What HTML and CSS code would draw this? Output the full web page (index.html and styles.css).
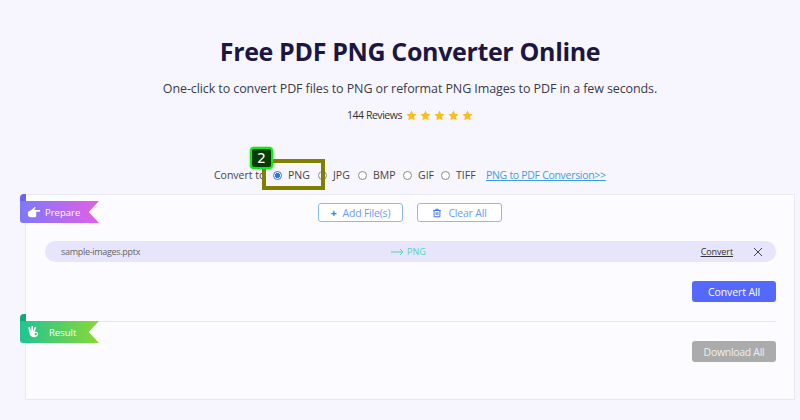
FILE: index.html
```html
<!DOCTYPE html>
<html lang="en">

<head>
  <meta charset="UTF-8">
  <meta name="viewport" content="width=device-width, initial-scale=1.0">
  <title>Free PDF PNG Converter Online</title>
  <link rel="stylesheet" href="styles.css">
</head>

<body>

  <div class="top">
    <h1>Free PDF PNG Converter Online</h1>
    <p class="sub">One-click to convert PDF files to PNG or reformat PNG Images to PDF in a few seconds.</p>
    <div class="reviews">
      <span>144 Reviews</span>
      <span class="stars">
        <svg viewBox="0 0 24 24"><path d="M12 1l3.300 7.300 7.700.9-5.700 5.300 1.600 7.800L12 18.300l-6.900 4 1.600-7.800L1 9.200l7.700-.9z" /></svg>
        <svg viewBox="0 0 24 24"><path d="M12 1l3.300 7.300 7.700.9-5.700 5.300 1.600 7.800L12 18.300l-6.900 4 1.600-7.800L1 9.200l7.700-.9z" /></svg>
        <svg viewBox="0 0 24 24"><path d="M12 1l3.300 7.300 7.700.9-5.700 5.300 1.600 7.800L12 18.300l-6.900 4 1.600-7.800L1 9.200l7.700-.9z" /></svg>
        <svg viewBox="0 0 24 24"><path d="M12 1l3.300 7.300 7.700.9-5.700 5.300 1.600 7.800L12 18.300l-6.900 4 1.600-7.800L1 9.200l7.700-.9z" /></svg>
        <svg viewBox="0 0 24 24"><path d="M12 1l3.300 7.300 7.700.9-5.700 5.300 1.600 7.800L12 18.300l-6.900 4 1.600-7.800L1 9.200l7.700-.9z" /></svg>
      </span>
    </div>
  </div>

  <div class="formats">
    <span class="formats-label">Convert to</span>
    <label class="opt opt-png"><span class="radio on"></span>PNG</label>
    <label class="opt opt-jpg"><span class="radio"></span>JPG</label>
    <label class="opt opt-bmp"><span class="radio"></span>BMP</label>
    <label class="opt opt-gif"><span class="radio"></span>GIF</label>
    <label class="opt opt-tiff"><span class="radio"></span>TIFF</label>
    <a class="formats-link" href="#">PNG to PDF Conversion&gt;&gt;</a>
  </div>

  <div class="card">
    <div class="tag tag-prepare">
      <svg viewBox="0 0 16 16"><path d="M1 8.500c0-.8.5-1.300 1.200-1.500L5 5.800 8.500 2.500c.7-.6 1.600.3 1.100 1L8.200 5.800h6c1.200 0 1.200 1.900 0 1.900h-3.700v5c0 .8-.7 1.300-1.400 1.300H4.500C2.500 14 1 12.500 1 10.500z" /></svg>
      <span>Prepare</span>
    </div>
    <div class="actions">
      <button class="btn-line"><span class="plus">+</span>Add File(s)</button>
      <button class="btn-line">
        <svg class="trash" viewBox="0 0 12 12"><path d="M1.500 3h9M4.500 3V1.500h3V3M2.500 3v7.500h7V3M5 5v3.500M7 5v3.500" /></svg>Clear All</button>
    </div>
    <div class="file-row">
      <span class="file-name">sample-images.pptx</span>
      <span class="file-target">
        <svg viewBox="0 0 13 8"><path d="M0 4h12M9 1l3 3-3 3" /></svg>
        PNG</span>
      <a class="file-convert" href="#">Convert</a>
      <svg class="file-close" viewBox="0 0 10 10"><path d="M1 1l8 8M9 1l-8 8" /></svg>
    </div>
    <div class="row-end">
      <button class="btn-fill">Convert All</button>
    </div>
    <div class="result">
      <div class="tag tag-result">
        <svg viewBox="0 0 16 16"><path d="M3 2l2 5 .2-6 1.600 0 .2 6 2-5 1.400.6-1.600 5.400c1.800-.6 3.700.4 3.700 2.400 0 2.100-1.700 3.600-4 3.600-3 0-5-1.600-5.500-4L1.500 3z" /><circle cx="10" cy="10.500" r="1.300" fill="#2cc78c" /></svg>
        <span>Result</span>
      </div>
      <div class="row-end">
        <button class="btn-fill btn-off">Download All</button>
      </div>
    </div>
  </div>

  <!-- annotation drawn over the page -->
  <div class="mark-box"></div>
  <div class="mark-num">2</div>

</body>

</html>
```

FILE: styles.css
```css
* {
  margin: 0;
  padding: 0;
  box-sizing: border-box;
}

html,
body {
  width: 100%;
  height: 100%;
  overflow: hidden;
}

body {
  background-color: #f7f6fe;
  color: #333;
  font-family: "Open Sans", "Noto Sans", sans-serif;
  position: relative;
}

.top {
  text-align: center;
  padding: 33px 0 0 20px;
}

h1 {
  font-size: 25px;
  line-height: 36px;
  font-weight: 700;
  letter-spacing: -0.35px;
  color: #1c1740;
}

.sub {
  font-size: 12.500px;
  line-height: 20px;
  margin-top: 10px;
  letter-spacing: -0.1px;
  color: #3b3b4a;
}

.reviews {
  display: flex;
  justify-content: center;
  align-items: center;
  gap: 4px;
  margin-top: 8px;
  font-size: 10.500px;
  line-height: 16px;
  letter-spacing: -0.45px;
}

.stars {
  display: flex;
  gap: 3px;
}

.stars svg {
  width: 11px;
  height: 11px;
  fill: #fdbd12;
}

.formats {
  display: flex;
  align-items: center;
  height: 20px;
  margin-top: 42px;
  padding-left: 214px;
  font-size: 10.500px;
  color: #444;
}

.formats-label {
  width: 59px;
}

.opt {
  display: flex;
  align-items: center;
  gap: 6px;
}

.opt-png {
  width: 45px;
}

.opt-jpg {
  width: 40px;
}

.opt-bmp {
  width: 45px;
}

.opt-gif {
  width: 38px;
}

.opt-tiff {
  width: 45px;
}

.radio {
  width: 9px;
  height: 9px;
  border-radius: 50%;
  border: 1px solid #8b8b8b;
  background: #fff;
}

.radio.on {
  border: 1px solid #2f73e8;
  background: radial-gradient(circle, #2f73e8 50%, #fff 58%);
}

.formats-link {
  color: #3d9be9;
  letter-spacing: -0.3px;
}

.card {
  position: relative;
  margin: 9px 5px 0 25px;
  height: 206px;
  background-color: #fcfbff;
  border: 1px solid #e9e8f3;
  padding-top: 8px;
}

.tag {
  position: absolute;
  left: -6px;
  width: 79px;
  height: 22px;
  display: flex;
  align-items: center;
  color: #fff;
  font-size: 9.500px;
  clip-path: polygon(0 0, 100% 0, 87% 50%, 100% 100%, 0 100%);
  border-radius: 0 0 0 3px;
}

.tag svg {
  width: 14px;
  height: 14px;
  fill: #fff;
  margin-left: 7px;
}

.tag span {
  margin-left: 4px;
}

.tag-prepare {
  top: 6px;
  background: linear-gradient(90deg, #7d78fb, #e25fe4);
}

.tag-result {
  top: -1px;
  background: linear-gradient(90deg, #1fc492, #8ad837);
}

.tag-result span {
  margin-left: 8px;
}

.card::before,
.result::before {
  content: "";
  position: absolute;
  left: -6px;
  width: 6px;
  height: 8px;
  border-radius: 4px 0 0 0;
}

.card::before {
  top: -1px;
  background: #6a63ee;
}

.result::before {
  top: -8px;
  background: #12a878;
}

.actions {
  display: flex;
  justify-content: center;
  gap: 14px;
}

.btn-line {
  display: flex;
  justify-content: center;
  align-items: center;
  gap: 6px;
  width: 85px;
  height: 19px;
  font: inherit;
  font-size: 10.500px;
  letter-spacing: -0.2px;
  color: #6c9bf6;
  background: #fff;
  border: 1px solid #8fb5fa;
  border-radius: 3px;
}

.plus {
  font-weight: 700;
  color: #3f78ee;
}

.trash {
  width: 10px;
  height: 10px;
  fill: none;
  stroke: #3f78ee;
  stroke-width: 1.200;
}

.file-row {
  display: flex;
  align-items: center;
  height: 21px;
  margin: 19px 18px 0 19px;
  padding: 0 13px 0 16px;
  background-color: #e7e5fb;
  border-radius: 11px;
  font-size: 9px;
}

.file-name {
  width: 330px;
  color: #666;
  letter-spacing: -0.3px;
}

.file-target {
  display: flex;
  align-items: center;
  gap: 3px;
  color: #56d3b0;
}

.file-target svg {
  width: 13px;
  height: 8px;
  fill: none;
  stroke: #56d3b0;
}

.file-convert {
  margin-left: auto;
  color: #333;
  letter-spacing: -0.1px;
}

.file-close {
  width: 10px;
  height: 10px;
  margin-left: 20px;
  fill: none;
  stroke: #444;
}

.row-end {
  display: flex;
  justify-content: flex-end;
  padding-right: 18px;
  margin-top: 19px;
}

.btn-fill {
  width: 84px;
  height: 21px;
  border: 0;
  border-radius: 3px;
  background-color: #5468fb;
  color: #fff;
  font: inherit;
  font-size: 10.500px;
  letter-spacing: -0.1px;
}

.btn-off {
  background-color: #ababab;
  color: #eee;
  letter-spacing: -0.3px;
}

.result {
  position: relative;
  margin-top: 19px;
  border-top: 1px solid #e6e6ef;
  margin-right: 18px;
}

.result .row-end {
  padding-right: 0;
}

.mark-box {
  position: absolute;
  left: 262px;
  top: 159px;
  width: 63px;
  height: 31px;
  border: 4px solid #808000;
}

.mark-num {
  position: absolute;
  left: 250px;
  top: 147px;
  width: 23px;
  height: 22px;
  background-color: #063c06;
  border: 2px solid #12e812;
  border-radius: 4px;
  box-shadow: 0 0 2px #12e812;
  color: #fff;
  font-family: "DejaVu Sans", sans-serif;
  font-size: 14px;
  line-height: 18px;
  text-align: center;
}
```
